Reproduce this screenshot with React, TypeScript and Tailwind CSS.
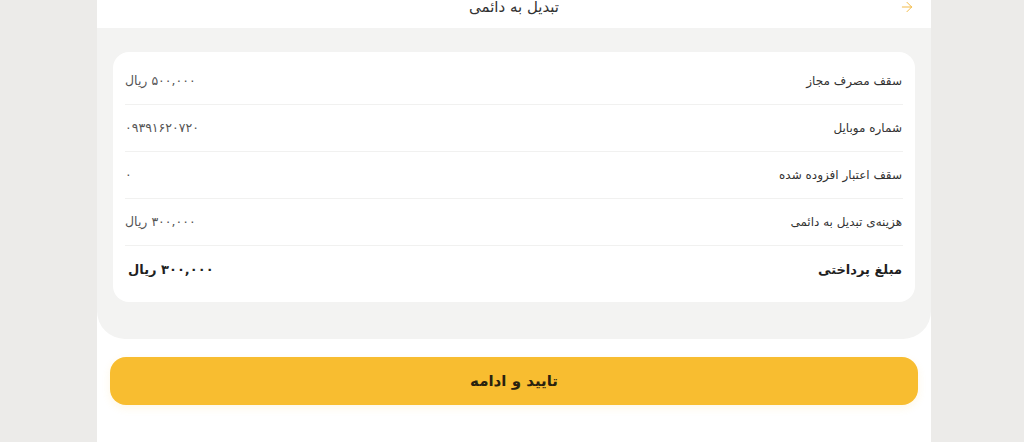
import { ArrowRight } from 'lucide-react'

const rows = [
  { label: 'سقف مصرف مجاز', value: '۵۰۰,۰۰۰ ریال' },
  { label: 'شماره موبایل', value: '۰۹۳۹۱۶۲۰۷۲۰' },
  { label: 'سقف اعتبار افزوده شده', value: '۰' },
  { label: 'هزینه‌ی تبدیل به دائمی', value: '۳۰۰,۰۰۰ ریال' },
]

export default function App() {
  return (
    <div
      dir="rtl"
      className="min-h-[442px] bg-[#ecebe9] flex justify-center pl-[4px]"
      style={{ fontFamily: '"DejaVu Sans", "Noto Sans", sans-serif' }}
    >
      <div className="w-[834px] bg-white flex flex-col">
        {/* header, scrolled partly out of view */}
        <header className="relative h-[56px] -mt-[28px] flex items-center justify-center">
          <button type="button" className="absolute right-[16px] top-[35px] -translate-y-1/2 text-[#f2b63a]">
            <ArrowRight className="h-[16px] w-[16px]" strokeWidth={1.4} />
          </button>
          <h1 className="text-[15px] text-[#333] pt-[14px]">تبدیل به دائمی</h1>
        </header>

        <section className="bg-[#f3f3f2] rounded-b-[28px] px-4 pt-6 pb-[37px]">
          <div className="bg-white rounded-2xl px-3 pt-[6px] pb-[8px]">
            {rows.map((row) => (
              <div
                key={row.label}
                className="h-[47px] flex items-center justify-between border-b border-[#f1f1f0]"
              >
                <span className="text-[12px] text-[#333] pr-px">{row.label}</span>
                <span className="text-[12.5px] text-[#555]">{row.value}</span>
              </div>
            ))}
            <div className="h-[48px] flex items-center justify-between">
              <span className="text-[13px] font-bold text-[#1f1f1f] pr-px">مبلغ پرداختی</span>
              <span className="text-[13px] font-bold text-[#1f1f1f] pl-[3px]">۳۰۰,۰۰۰ ریال</span>
            </div>
          </div>
        </section>

        <div className="px-[13px] pt-[18px]">
          <button
            type="button"
            className="w-full h-[48px] rounded-2xl bg-[#f8bd30] text-[15px] font-bold text-[#2a220f] shadow-[0_3px_8px_rgba(248,189,48,0.12)]"
          >
            تایید و ادامه
          </button>
        </div>
      </div>
    </div>
  )
}
